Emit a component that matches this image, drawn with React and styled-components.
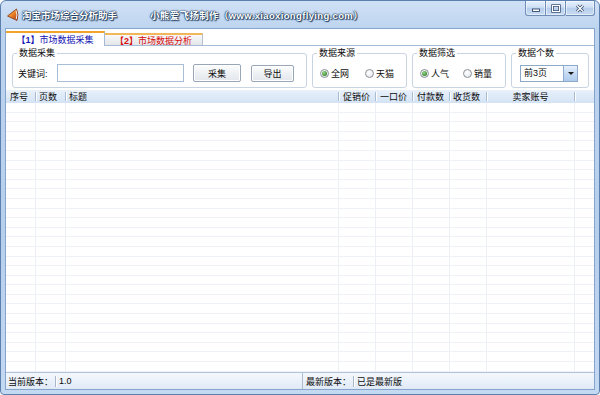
import React from "react";
import styled, { createGlobalStyle } from "styled-components";

const GlobalStyle = createGlobalStyle`
  html, body {
    margin: 0;
    padding: 0;
    background: #fff;
  }
  body {
    font-family: "Liberation Sans", "Noto Sans CJK SC", sans-serif;
    font-size: 9px;
    color: #0c0c0c;
  }
  * {
    box-sizing: border-box;
  }
`;

const Window = styled.div`
  width: 600px;
  height: 395px;
  display: flex;
  flex-direction: column;
  border: 1px solid #5b7fae;
  border-radius: 6px 6px 4px 4px;
  background: linear-gradient(#d0e1f6, #bdd4ef 28px, #b6cfed 60%, #c4d9f2);
  padding: 0 4px 4px;
  overflow: hidden;
`;

const TitleBar = styled.div`
  height: 27px;
  flex: none;
  display: flex;
  align-items: center;
`;

const AppIcon = styled.svg`
  margin: 0 2px 0 1px;
  flex: none;
`;

const TitleText = styled.span`
  font-size: 9.5px;
  font-weight: bold;
  color: #fff;
  margin-left: ${(p) => p.$gap || 0}px;
  letter-spacing: ${(p) => p.$spacing || 0}px;
  white-space: nowrap;
  text-shadow: 0 0 1px #14304f, 0 0 1px #14304f, 0 0 2px #24446f, 1px 1px 1px #24446f;
`;

const CaptionGroup = styled.div`
  margin-left: auto;
  align-self: flex-start;
  display: flex;
`;

const CaptionButton = styled.div`
  width: ${(p) => p.$w}px;
  height: 15px;
  display: flex;
  align-items: center;
  justify-content: center;
  border: 1px solid #6f8db7;
  border-top: none;
  border-left: ${(p) => (p.$joined ? "none" : "1px solid #6f8db7")};
  border-radius: ${(p) => p.$radius};
  background: linear-gradient(#e6f0fc, #cfe0f5 45%, #b6cdeb 50%, #c8dbf2);
  box-shadow: inset 0 0 0 1px rgba(255, 255, 255, 0.5);
`;

const Client = styled.div`
  flex: 1;
  display: flex;
  flex-direction: column;
  border: 1px solid #86a4cc;
  background: #fff;
  overflow: hidden;
`;

const TabStrip = styled.div`
  height: 16px;
  flex: none;
  display: flex;
  align-items: flex-end;
`;

const Tab = styled.div`
  position: relative;
  z-index: ${(p) => (p.$active ? 1 : 0)};
  width: ${(p) => (p.$active ? 99 : 98)}px;
  height: ${(p) => (p.$active ? 15 : 12)}px;
  margin-bottom: ${(p) => (p.$active ? -1 : 0)}px;
  display: flex;
  align-items: center;
  justify-content: center;
  white-space: nowrap;
  color: ${(p) => (p.$active ? "#1414b4" : "#d80c0c")};
  background: ${(p) =>
    p.$active ? "#fff" : "linear-gradient(#f8f8f8, #e4e6ea)"};
  border: 1px solid ${(p) => (p.$active ? "#a5bad5" : "#b3c1d3")};
  border-top: 2px solid ${(p) => (p.$active ? "#f0a42c" : "#f2b75a")};
  border-left: none;
  border-bottom: none;

  b {
    font-weight: bold;
  }
`;

const TabPage = styled.div`
  height: 45px;
  flex: none;
  border-top: 1px solid #a5bad5;
  display: grid;
  grid-template-columns: 295px 95px 94px 78px;
  column-gap: 5px;
  padding: 7px 0 0 6px;
`;

const Group = styled.div`
  height: 35px;
  display: flex;
  flex-direction: column;
  border: 1px solid #c8d4e2;
  border-radius: 3px;
  box-shadow: inset 1px 1px 0 #fff;
`;

const Legend = styled.span`
  align-self: flex-start;
  margin: -6px 0 0 4px;
  padding: 0 2px;
  background: #fff;
  line-height: 11px;
`;

const GroupBody = styled.div`
  flex: 1;
  display: flex;
  align-items: center;
  gap: ${(p) => p.$gap || 0}px;
  padding-left: ${(p) => p.$pad}px;
`;

const FieldLabel = styled.span`
  width: 39px;
  flex: none;
`;

const TextInput = styled.div`
  width: 127px;
  height: 18px;
  border: 1px solid #a8bed8;
  background: #fff;
`;

const Button = styled.div`
  width: ${(p) => p.$w}px;
  height: ${(p) => p.$h || 18}px;
  margin-left: ${(p) => p.$ml}px;
  display: flex;
  align-items: center;
  justify-content: center;
  border: 1px solid #98a6b8;
  border-radius: 2px;
  background: linear-gradient(#fdfdfd, #eef1f4 50%, #e3e7ec);
  box-shadow: inset 0 0 0 1px #fff;
`;

const Radio = styled.label`
  display: flex;
  align-items: center;
  gap: 2px;
  white-space: nowrap;
`;

const RadioDot = styled.span`
  width: 9px;
  height: 9px;
  border-radius: 50%;
  border: 1px solid #8d9196;
  background: radial-gradient(circle at 40% 35%, #fff, #dfe4ea);
  display: flex;
  align-items: center;
  justify-content: center;

  &::after {
    content: "";
    width: 5px;
    height: 5px;
    border-radius: 50%;
    background: ${(p) =>
      p.$checked
        ? "radial-gradient(circle at 40% 35%, #9bd88a, #3b8d34 70%)"
        : "transparent"};
  }
`;

const Combo = styled.div`
  width: 58px;
  height: 17px;
  margin-left: 1px;
  display: flex;
  border: 1px solid #8ea8c8;
  background: #fff;
`;

const ComboText = styled.span`
  flex: 1;
  padding-left: 3px;
  line-height: 15px;
`;

const ComboButton = styled.span`
  width: 14px;
  display: flex;
  align-items: center;
  justify-content: center;
  border-left: 1px solid #8eabd0;
  background: linear-gradient(#e8f1fc, #c6dbf3 50%, #aecbee);

  &::after {
    content: "";
    border-left: 3px solid transparent;
    border-right: 3px solid transparent;
    border-top: 3px solid #1a1a1a;
  }
`;

const COLUMNS = "30px 30px 273px 37px 37px 37px 37px 88px 1fr";

const HeaderRow = styled.div`
  height: 13px;
  flex: none;
  display: grid;
  grid-template-columns: ${COLUMNS};
  background: linear-gradient(#e9f1fb, #d3e3f5);
`;

const HeaderCell = styled.div`
  display: flex;
  align-items: center;
  white-space: nowrap;

  span {
    flex: 1;
    padding-left: ${(p) => p.$pad || 0}px;
    text-align: ${(p) => (p.$center ? "center" : "left")};
  }

  &::after {
    content: "";
    flex: none;
    width: 1px;
    height: 9px;
    background: ${(p) => (p.$last ? "transparent" : "#a9bbd2")};
    box-shadow: ${(p) => (p.$last ? "none" : "1px 0 0 #fff")};
  }
`;

const Body = styled.div`
  flex: 1;
  overflow: hidden;
  background: #fff;
`;

const Row = styled.div`
  height: 9.6px;
  display: grid;
  grid-template-columns: ${COLUMNS};
  border-bottom: 1px solid #eef1f5;
`;

const Cell = styled.div`
  border-right: 1px solid #eceff3;

  &:last-child {
    border-right: none;
  }
`;

const StatusBar = styled.div`
  height: 17px;
  flex: none;
  display: grid;
  grid-template-columns: 296px 1fr;
  border-top: 1px solid #b2c4db;
  background: linear-gradient(#f4f8fd, #e0eaf6);
`;

const StatusPane = styled.div`
  display: flex;
  align-items: center;
  padding-left: ${(p) => p.$pad}px;
  border-left: ${(p) => (p.$divided ? "1px solid #aebdd0" : "none")};
  white-space: nowrap;
`;

const StatusSep = styled.span`
  width: 1px;
  height: 11px;
  margin: 0 3px 0 2px;
  background: #a8b7ca;
  box-shadow: 1px 0 0 #fff;
`;

const headers = [
  { label: "序号", pad: 4 },
  { label: "页数", pad: 3 },
  { label: "标题", pad: 3 },
  { label: "促销价", pad: 4 },
  { label: "一口价", pad: 4 },
  { label: "付款数", pad: 4 },
  { label: "收货数", pad: 3 },
  { label: "卖家账号", center: true },
  { label: "", last: true },
];

const rows = Array.from({ length: 28 }, (_, i) => i);

function Logo() {
  return (
    <AppIcon width="14" height="15" viewBox="0 0 14 15">
      <defs>
        <linearGradient id="logoFill" x1="0" y1="0" x2="1" y2="1">
          <stop offset="0" stopColor="#ffd985" />
          <stop offset="0.45" stopColor="#f28a28" />
          <stop offset="1" stopColor="#a8381a" />
        </linearGradient>
      </defs>
      <path
        d="M1.5 9 L10.5 2 Q13 7.5 11 13.5 Z"
        fill="url(#logoFill)"
        stroke="#7f3512"
        strokeWidth="0.8"
      />
      <path d="M10 3.5 Q11.8 8 10.2 12.3" stroke="#e9eef5" strokeWidth="1" fill="none" />
    </AppIcon>
  );
}

function MinGlyph() {
  return (
    <svg width="10" height="9" viewBox="0 0 10 9">
      <rect x="1.5" y="5" width="7" height="2.5" fill="#fff" stroke="#34496a" strokeWidth="0.9" />
    </svg>
  );
}

function MaxGlyph() {
  return (
    <svg width="10" height="9" viewBox="0 0 10 9">
      <rect x="1.5" y="1.5" width="7" height="6" fill="none" stroke="#34496a" strokeWidth="2.4" />
      <rect x="1.5" y="1.5" width="7" height="6" fill="none" stroke="#fff" strokeWidth="1" />
    </svg>
  );
}

function CloseGlyph() {
  return (
    <svg width="10" height="9" viewBox="0 0 10 9">
      <path d="M2 1.5 L8 7.5 M8 1.5 L2 7.5" stroke="#34496a" strokeWidth="3" />
      <path d="M2 1.5 L8 7.5 M8 1.5 L2 7.5" stroke="#fff" strokeWidth="1.4" />
    </svg>
  );
}

export default function App() {
  return (
    <>
      <GlobalStyle />
      <Window>
        <TitleBar>
          <Logo />
          <TitleText>淘宝市场综合分析助手</TitleText>
          <TitleText $gap={33} $spacing={0.35}>
            小熊爱飞扬制作（www.xiaoxiongflying.com）
          </TitleText>
          <CaptionGroup>
            <CaptionButton $w={21} $radius="0 0 0 3px">
              <MinGlyph />
            </CaptionButton>
            <CaptionButton $w={20} $joined $radius="0 0 3px 0">
              <MaxGlyph />
            </CaptionButton>
            <CaptionButton $w={29} $joined $radius="0 0 3px 0">
              <CloseGlyph />
            </CaptionButton>
          </CaptionGroup>
        </TitleBar>

        <Client>
          <TabStrip>
            <Tab $active>
              <b>【1】</b>市场数据采集
            </Tab>
            <Tab>
              <b>【2】</b>市场数据分析
            </Tab>
          </TabStrip>

          <TabPage>
            <Group>
              <Legend>数据采集</Legend>
              <GroupBody $pad={5}>
                <FieldLabel>关键词:</FieldLabel>
                <TextInput />
                <Button $w={48} $ml={9}>采集</Button>
                <Button $w={43} $h={17} $ml={10}>导出</Button>
              </GroupBody>
            </Group>

            <Group>
              <Legend>数据来源</Legend>
              <GroupBody $pad={7} $gap={16}>
                <Radio>
                  <RadioDot $checked />
                  全网
                </Radio>
                <Radio>
                  <RadioDot />
                  天猫
                </Radio>
              </GroupBody>
            </Group>

            <Group>
              <Legend>数据筛选</Legend>
              <GroupBody $pad={7} $gap={14}>
                <Radio>
                  <RadioDot $checked />
                  人气
                </Radio>
                <Radio>
                  <RadioDot />
                  销量
                </Radio>
              </GroupBody>
            </Group>

            <Group>
              <Legend>数据个数</Legend>
              <GroupBody $pad={7}>
                <Combo>
                  <ComboText>前3页</ComboText>
                  <ComboButton />
                </Combo>
              </GroupBody>
            </Group>
          </TabPage>

          <HeaderRow>
            {headers.map((h, i) => (
              <HeaderCell key={i} $pad={h.pad} $center={h.center} $last={h.last}>
                <span>{h.label}</span>
              </HeaderCell>
            ))}
          </HeaderRow>

          <Body>
            {rows.map((r) => (
              <Row key={r}>
                {headers.map((h, i) => (
                  <Cell key={i} />
                ))}
              </Row>
            ))}
          </Body>

          <StatusBar>
            <StatusPane $pad={2}>
              当前版本：
              <StatusSep />
              1.0
            </StatusPane>
            <StatusPane $pad={3} $divided>
              最新版本：
              <StatusSep />
              已是最新版
            </StatusPane>
          </StatusBar>
        </Client>
      </Window>
    </>
  );
}
